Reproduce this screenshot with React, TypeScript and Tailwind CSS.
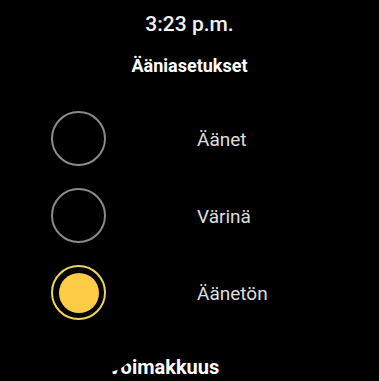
import React from 'react';

const options = [
  { label: 'Äänet', selected: false },
  { label: 'Värinä', selected: false },
  { label: 'Äänetön', selected: true },
];

function Radio({ selected }: { selected: boolean }) {
  if (selected) {
    return (
      <div className="flex h-[55px] w-[55px] items-center justify-center rounded-full border-2 border-[#f0d35c]">
        <div className="h-[40px] w-[40px] rounded-full bg-[#fdcb45]" />
      </div>
    );
  }
  return <div className="h-[55px] w-[55px] rounded-full border-2 border-[#8a8a8a]" />;
}

export default function App() {
  return (
    <div
      className="relative flex h-[381px] w-[379px] flex-col overflow-hidden bg-black text-white"
      style={{ fontFamily: 'Roboto, "Noto Sans", sans-serif' }}
    >
      <div className="pt-[12px] text-center text-[21px] font-medium leading-[24px] text-[#f2f2f2]">
        3:23 p.m.
      </div>
      <div className="mt-[20px] text-center text-[18px] font-bold leading-[20px]">Ääniasetukset</div>

      <div className="mt-[35px] flex flex-col gap-[22px] pl-[51px]">
        {options.map((o) => (
          <div key={o.label} className="flex items-center">
            <Radio selected={o.selected} />
            <span className="ml-[91px] pt-[2px] text-[19px] font-normal leading-[22px] text-[#dedede]">
              {o.label}
            </span>
          </div>
        ))}
      </div>

      <div className="relative mt-[36px] pl-[108px] text-[20px] font-bold leading-[22px]">
        Voimakkuus
        <div className="absolute left-[58px] top-[-30px] h-[48px] w-[76px] rounded-[50%] bg-black" />
      </div>
    </div>
  );
}
